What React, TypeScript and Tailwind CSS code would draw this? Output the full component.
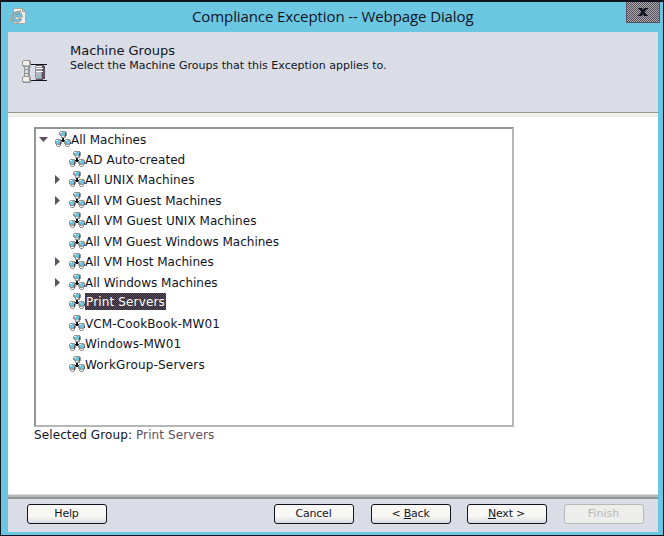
import type { ReactNode } from "react";

type Row = { label: string; gap?: string; tracking?: string; expandable?: boolean; selected?: boolean };

const rows: Row[] = [
  { label: "AD Auto-created", tracking: "tracking-[0.06px]" },
  { label: "All UNIX Machines", tracking: "tracking-[0.06px]", expandable: true },
  { label: "All VM Guest Machines", gap: "mt-px", expandable: true },
  { label: "All VM Guest UNIX Machines", tracking: "tracking-[0.06px]" },
  { label: "All VM Guest Windows Machines", gap: "mt-px" },
  { label: "All VM Host Machines", expandable: true },
  { label: "All Windows Machines", gap: "mt-px", expandable: true },
  { label: "Print Servers", gap: "-mt-px", tracking: "tracking-[0.15px]", selected: true },
  { label: "VCM-CookBook-MW01", gap: "mt-[2px]", tracking: "tracking-[0.12px]" },
  { label: "Windows-MW01", tracking: "tracking-[0.06px]" },
  { label: "WorkGroup-Servers", gap: "mt-px", tracking: "tracking-[0.18px]" },
];

function GroupIcon() {
  return (
    <svg width="16" height="16" viewBox="0 0 16 16" className="shrink-0" shapeRendering="crispEdges">
      <path d="M5 0h6v1h1v4h-1v2H6V5H5V4H4V1h1z" fill="#929794" />
      <path d="M1 8h5v1h1v4H6v2H5v1H2v-1H1v-2H0V9h1zM10 8h5v1h1v4h-1v2h-1v1h-3v-1h-1v-2H9V9h1z" fill="#929794" />
      <path d="M7 7h2v2h1v1H9v1H7v-1H6V9h1z" fill="#10141f" />
      <path d="M6 1h4v3H9v1H7V4H6zM2 9h3v3H4v1H2v-1H1v-2h1zM11 9h3v1h1v2h-1v1h-2v-1h-1z" fill="#6bc6e2" />
      <path d="M5 1h2v1H5zM1 9h2v1H1zM10 9h2v1h-2zM7 5h2v1H7zM2 14h3v1H2zM11 14h3v1h-3z" fill="#f3f1ea" />
      <path d="M10 2h1v3h-1zM5 11h1v3H5zM15 11h1v2h-1z" fill="#5d5060" />
    </svg>
  );
}

function PageIcon() {
  return (
    <svg width="17" height="17" viewBox="0 0 17 17">
      <path d="M3.5.5h9l3 3v12h-12z" fill="#f3f1ea" stroke="#a4a7a7" />
      <path d="M12.500.5v3h3" fill="none" stroke="#929794" />
      <path d="M10.800 10.500a4 4 0 1 1 .2-2.600H4" fill="none" stroke="#929794" strokeWidth="3.4" />
      <path d="M10.800 10.500a4 4 0 1 1 .2-2.600H4" fill="none" stroke="#6bc6e2" strokeWidth="1.7" />
      <path d="M1 14C-1 10 4 4 11 3" fill="none" stroke="#a4a7a7" strokeWidth="1.4" />
    </svg>
  );
}

function MachinesIcon() {
  return (
    <svg width="26" height="26" viewBox="0 0 26 26" shapeRendering="crispEdges">
      <path d="M9 4h16v1H9zM9 20h16v1H9z" fill="#10141f" />
      <rect x="2" y="7" width="6" height="10" fill="#929794" />
      <path d="M3 7h3v10H3z" fill="#dadde5" />
      <path d="M3 9h4v1H3zM3 13h4v1H3z" fill="#929794" />
      <path d="M1 0h7v1h1v6H1V6H0V1h1zM1 16h7v1h1v6H1v-1H0v-5h1z" fill="#929794" />
      <path d="M1 1h6v4H1zM1 17h6v4H1z" fill="#f3f1ea" />
      <path d="M2 5h6v1H2zM2 21h6v1H2z" fill="#b6b7b8" />
      <path d="M14 5h8v1h1v13h-2v1h-7v-1h-1V6h1z" fill="#5d5060" />
      <path d="M13 6h7v13h-7z" fill="#929794" />
      <path d="M14 6h6v1h-6zM14 8h7v1h-7zM14 11h7v1h-7z" fill="#fff" />
      <path d="M14 12h5v6h-5z" fill="#b6b7b8" />
      <path d="M16 16h2v2h-2z" fill="#6bc6e2" />
    </svg>
  );
}

function DialogButton({ children, disabled = false }: { children: ReactNode; disabled?: boolean }) {
  return (
    <button
      disabled={disabled}
      className={
        disabled
          ? "h-5 w-20 rounded-[3px] border border-[#b6b7b8] bg-[#edeeec] text-[#b6b7b8]"
          : "h-5 w-20 rounded-[3px] border border-[#10141f] bg-linear-to-b from-[#f9f8f4] from-60% to-[#dadde5] tracking-[-0.2px] text-[#10141f]"
      }
    >
      <span className="block pr-px text-[11px] leading-[18px]">{children}</span>
    </button>
  );
}

export default function App() {
  return (
    <div className="flex h-[536px] w-[664px] flex-col border border-t-2 border-[#10141f] bg-[#6bc6e2] font-['DejaVu_Sans',sans-serif] text-[#10141f]">
      <div className="flex h-[30px] shrink-0 items-start">
        <div className="w-[191px] pt-[6px] pl-[9px]"><PageIcon /></div>
        <h1 className="w-[283px] pt-[3px] font-[Open_Sans] text-[15px] leading-[22px] tracking-[-0.1px] whitespace-nowrap">
          Compliance Exception -- Webpage Dialog
        </h1>
        <button className="ml-[151px] flex h-[21px] w-[34px] justify-center border border-t-0 border-[#5d5060] bg-[repeating-conic-gradient(#5d5060_0_25%,#a4a7a7_0_50%)] bg-size-[2px_2px] pt-[6px]">
          <svg width="10" height="8" viewBox="0 0 10 8">
            <path d="M0 0h4l1 2 1-2h4v1H9L6.500 4 9 7h1v1H6L5 6 4 8H0V7h1l2.500-3L1 1H0z" fill="#10141f" />
          </svg>
        </button>
      </div>
      <div className="mr-[5px] ml-[7px] flex h-[500px] flex-col bg-white">
        <header className="flex h-[81px] shrink-0 border-b border-[#929794] bg-[#dadde5]">
          <div className="w-[62px] pt-[28px] pl-[14px]"><MachinesIcon /></div>
          <div className="pt-[11px] whitespace-nowrap">
            <h2 className="text-[13px] leading-4">Machine Groups</h2>
            <p className="text-[11px] leading-[14px] tracking-[0.02px]">Select the Machine Groups that this Exception applies to.</p>
          </div>
        </header>
        <div className="h-[3px] shrink-0 bg-[#f3f1ea]" />
        <div className="h-px shrink-0 bg-[#e6e8ec]" />
        <main className="h-[377px] shrink-0 pt-[10px] pl-[26px]">
          <div className="h-[300px] w-[480px] border-2 border-[#b6b7b8] border-t-[#929794] border-l-[#929794] text-[12px] leading-[18px] whitespace-nowrap">
            <div className="flex h-5 items-center pl-[3px]">
              <svg width="9" height="5" viewBox="0 0 9 5" className="mr-[7px]"><path d="M0 0h9L4.500 5z" fill="#5d5060" /></svg>
              <GroupIcon />
              <span className="pt-[2px]">All Machines</span>
            </div>
            {rows.map((row) => (
              <div key={row.label} className={`flex h-5 items-center pl-[19px] ${row.gap ?? ""} ${row.tracking ?? ""}`}>
                <span className="w-[14px]">
                  {row.expandable && (
                    <svg width="5" height="9" viewBox="0 0 5 9"><path d="M0 0v9l5-4.500z" fill="#5d5060" /></svg>
                  )}
                </span>
                <GroupIcon />
                {row.selected ? (
                  <span className="h-[17px] w-[81px] bg-[repeating-conic-gradient(#2b2632_0_25%,#5d5060_0_50%)] bg-size-[2px_2px] pl-px leading-[18px] text-white">
                    {row.label}
                  </span>
                ) : (
                  <span className="pt-[2px]">{row.label}</span>
                )}
              </div>
            ))}
          </div>
          <p className="text-[12px] leading-4 tracking-[0.11px] whitespace-nowrap">
            Selected Group: <span className="text-[#5d5060]">Print Servers</span>
          </p>
        </main>
        <div className="h-[3px] shrink-0 border-t border-[#dadde5] bg-[#b6b7b8]" />
        <div className="h-[2px] shrink-0 bg-[#929794]" />
        <footer className="flex h-[33px] shrink-0 bg-[#dadde5] pt-[5px] pl-[19px]">
          <DialogButton>Help</DialogButton>
          <div className="ml-[167px] flex gap-[17px]">
            <DialogButton>Cancel</DialogButton>
            <DialogButton>&lt; <u>B</u>ack</DialogButton>
            <div className="-ml-px flex gap-[17px]">
              <DialogButton><u>N</u>ext &gt;</DialogButton>
              <DialogButton disabled>Finish</DialogButton>
            </div>
          </div>
        </footer>
      </div>
    </div>
  );
}
